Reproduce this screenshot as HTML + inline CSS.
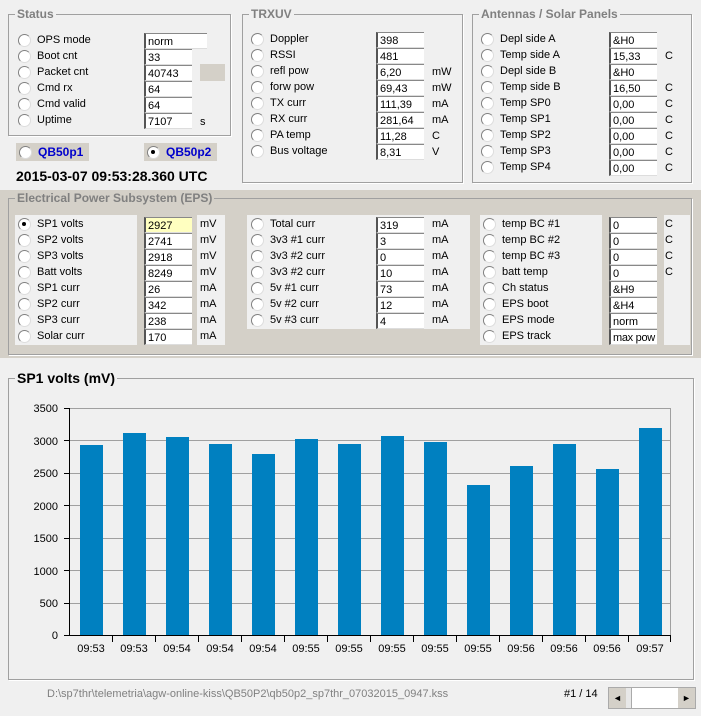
<!DOCTYPE html><html><head><meta charset="utf-8"><style>
*{margin:0;padding:0;box-sizing:border-box}
body{width:701px;height:716px;background:#f0f0f0;font-family:"Liberation Sans",Arial,sans-serif;font-size:11px;color:#000;position:relative;overflow:hidden}
.a{position:absolute}
.gb{position:absolute;border:1px solid #a0a0a0;box-shadow:1px 1px 0 #fff}
.gt{position:absolute;background:#f0f0f0;color:#808080;font-weight:bold;font-size:12px;padding:0 2px;top:-8px;left:6px;line-height:14px}
.r{position:absolute;height:16px;line-height:16px;padding-left:22px;white-space:nowrap}
.r:before{content:"";position:absolute;left:3px;top:2px;width:11px;height:11px;border-radius:50%;background:#fff;border:1px solid #808080;border-right-color:#ddd;border-bottom-color:#ddd}
.r.on:after{content:"";position:absolute;left:7px;top:6px;width:4px;height:4px;border-radius:50%;background:#000}
.v{position:absolute;width:48px;height:16px;background:#fff;border-left:2px solid #555;border-top:1px solid #888;border-bottom:1px solid #ddd;line-height:16px;padding-left:2px;font-size:11px;white-space:nowrap;overflow:hidden}
.u{position:absolute;line-height:14px}
.p{position:absolute;background:#f0f0f0}
</style></head><body>

<!-- Status -->
<div class="gb" style="left:8px;top:14px;width:223px;height:122px"><div class="gt">Status</div></div>
<div class="r" style="left:15px;top:32px">OPS mode</div>
<div class="r" style="left:15px;top:48px">Boot cnt</div>
<div class="r" style="left:15px;top:64px">Packet cnt</div>
<div class="r" style="left:15px;top:80px">Cmd rx</div>
<div class="r" style="left:15px;top:96px">Cmd valid</div>
<div class="r" style="left:15px;top:112px">Uptime</div>
<div class="v" style="left:144px;top:33px;width:63px">norm</div>
<div class="v" style="left:144px;top:49px">33</div>
<div class="v" style="left:144px;top:65px">40743</div>
<div class="v" style="left:144px;top:81px">64</div>
<div class="v" style="left:144px;top:97px">64</div>
<div class="v" style="left:144px;top:113px">7107</div>
<div class="a" style="left:200px;top:64px;width:25px;height:17px;background:#d4d0c8"></div>
<div class="u" style="left:200px;top:115px">s</div>
<div class="a" style="left:16px;top:143px;width:73px;height:18px;background:#d4d0c8"></div>
<div class="r" style="left:16px;top:144px;color:#00c;font-weight:bold;font-size:12px">QB50p1</div>
<div class="a" style="left:144px;top:143px;width:73px;height:18px;background:#d4d0c8"></div>
<div class="r on" style="left:144px;top:144px;color:#00c;font-weight:bold;font-size:12px">QB50p2</div>
<div class="a" style="left:16px;top:168px;font-weight:bold;font-size:14px">2015-03-07 09:53:28.360 UTC</div>

<!-- TRXUV -->
<div class="gb" style="left:242px;top:14px;width:221px;height:169px"><div class="gt">TRXUV</div></div>
<div class="r" style="left:248px;top:31px">Doppler</div>
<div class="r" style="left:248px;top:47px">RSSI</div>
<div class="r" style="left:248px;top:63px">refl pow</div>
<div class="r" style="left:248px;top:79px">forw pow</div>
<div class="r" style="left:248px;top:95px">TX curr</div>
<div class="r" style="left:248px;top:111px">RX curr</div>
<div class="r" style="left:248px;top:127px">PA temp</div>
<div class="r" style="left:248px;top:143px">Bus voltage</div>
<div class="v" style="left:376px;top:32px">398</div>
<div class="v" style="left:376px;top:48px">481</div>
<div class="v" style="left:376px;top:64px">6,20</div>
<div class="v" style="left:376px;top:80px">69,43</div>
<div class="v" style="left:376px;top:96px">111,39</div>
<div class="v" style="left:376px;top:112px">281,64</div>
<div class="v" style="left:376px;top:128px">11,28</div>
<div class="v" style="left:376px;top:144px">8,31</div>
<div class="u" style="left:432px;top:65px">mW</div>
<div class="u" style="left:432px;top:81px">mW</div>
<div class="u" style="left:432px;top:97px">mA</div>
<div class="u" style="left:432px;top:113px">mA</div>
<div class="u" style="left:432px;top:129px">C</div>
<div class="u" style="left:432px;top:145px">V</div>

<!-- Antennas -->
<div class="gb" style="left:472px;top:14px;width:220px;height:169px"><div class="gt">Antennas / Solar Panels</div></div>
<div class="r" style="left:478px;top:31px">Depl side A</div>
<div class="r" style="left:478px;top:47px">Temp side A</div>
<div class="r" style="left:478px;top:63px">Depl side B</div>
<div class="r" style="left:478px;top:79px">Temp side B</div>
<div class="r" style="left:478px;top:95px">Temp SP0</div>
<div class="r" style="left:478px;top:111px">Temp SP1</div>
<div class="r" style="left:478px;top:127px">Temp SP2</div>
<div class="r" style="left:478px;top:143px">Temp SP3</div>
<div class="r" style="left:478px;top:159px">Temp SP4</div>
<div class="v" style="left:609px;top:32px">&amp;H0</div>
<div class="v" style="left:609px;top:48px">15,33</div>
<div class="v" style="left:609px;top:64px">&amp;H0</div>
<div class="v" style="left:609px;top:80px">16,50</div>
<div class="v" style="left:609px;top:96px">0,00</div>
<div class="v" style="left:609px;top:112px">0,00</div>
<div class="v" style="left:609px;top:128px">0,00</div>
<div class="v" style="left:609px;top:144px">0,00</div>
<div class="v" style="left:609px;top:160px">0,00</div>
<div class="u" style="left:665px;top:49px">C</div>
<div class="u" style="left:665px;top:81px">C</div>
<div class="u" style="left:665px;top:97px">C</div>
<div class="u" style="left:665px;top:113px">C</div>
<div class="u" style="left:665px;top:129px">C</div>
<div class="u" style="left:665px;top:145px">C</div>
<div class="u" style="left:665px;top:161px">C</div>

<!-- EPS -->
<div class="a" style="left:0;top:190px;width:701px;height:168px;background:#d4d0c8"></div>
<div class="gb" style="left:8px;top:198px;width:684px;height:157px"><div class="gt" style="background:#d4d0c8">Electrical Power Subsystem (EPS)</div></div>
<div class="p" style="left:15px;top:215px;width:122px;height:130px"></div>
<div class="p" style="left:197px;top:215px;width:28px;height:130px"></div>
<div class="p" style="left:247px;top:215px;width:223px;height:114px"></div>
<div class="p" style="left:480px;top:215px;width:122px;height:130px"></div>
<div class="p" style="left:664px;top:215px;width:26px;height:130px"></div>
<div class="r on" style="left:15px;top:216px">SP1 volts</div>
<div class="r" style="left:15px;top:232px">SP2 volts</div>
<div class="r" style="left:15px;top:248px">SP3 volts</div>
<div class="r" style="left:15px;top:264px">Batt volts</div>
<div class="r" style="left:15px;top:280px">SP1 curr</div>
<div class="r" style="left:15px;top:296px">SP2 curr</div>
<div class="r" style="left:15px;top:312px">SP3 curr</div>
<div class="r" style="left:15px;top:328px">Solar curr</div>
<div class="v" style="left:144px;top:217px;background:#ffffc0">2927</div>
<div class="v" style="left:144px;top:233px">2741</div>
<div class="v" style="left:144px;top:249px">2918</div>
<div class="v" style="left:144px;top:265px">8249</div>
<div class="v" style="left:144px;top:281px">26</div>
<div class="v" style="left:144px;top:297px">342</div>
<div class="v" style="left:144px;top:313px">238</div>
<div class="v" style="left:144px;top:329px">170</div>
<div class="u" style="left:200px;top:217px">mV</div>
<div class="u" style="left:200px;top:233px">mV</div>
<div class="u" style="left:200px;top:249px">mV</div>
<div class="u" style="left:200px;top:265px">mV</div>
<div class="u" style="left:200px;top:281px">mA</div>
<div class="u" style="left:200px;top:297px">mA</div>
<div class="u" style="left:200px;top:313px">mA</div>
<div class="u" style="left:200px;top:329px">mA</div>

<div class="r" style="left:248px;top:216px">Total curr</div>
<div class="r" style="left:248px;top:232px">3v3 #1 curr</div>
<div class="r" style="left:248px;top:248px">3v3 #2 curr</div>
<div class="r" style="left:248px;top:264px">3v3 #2 curr</div>
<div class="r" style="left:248px;top:280px">5v #1 curr</div>
<div class="r" style="left:248px;top:296px">5v #2 curr</div>
<div class="r" style="left:248px;top:312px">5v #3 curr</div>
<div class="v" style="left:376px;top:217px">319</div>
<div class="v" style="left:376px;top:233px">3</div>
<div class="v" style="left:376px;top:249px">0</div>
<div class="v" style="left:376px;top:265px">10</div>
<div class="v" style="left:376px;top:281px">73</div>
<div class="v" style="left:376px;top:297px">12</div>
<div class="v" style="left:376px;top:313px">4</div>
<div class="u" style="left:432px;top:217px">mA</div>
<div class="u" style="left:432px;top:233px">mA</div>
<div class="u" style="left:432px;top:249px">mA</div>
<div class="u" style="left:432px;top:265px">mA</div>
<div class="u" style="left:432px;top:281px">mA</div>
<div class="u" style="left:432px;top:297px">mA</div>
<div class="u" style="left:432px;top:313px">mA</div>

<div class="r" style="left:480px;top:216px">temp BC #1</div>
<div class="r" style="left:480px;top:232px">temp BC #2</div>
<div class="r" style="left:480px;top:248px">temp BC #3</div>
<div class="r" style="left:480px;top:264px">batt temp</div>
<div class="r" style="left:480px;top:280px">Ch status</div>
<div class="r" style="left:480px;top:296px">EPS boot</div>
<div class="r" style="left:480px;top:312px">EPS mode</div>
<div class="r" style="left:480px;top:328px">EPS track</div>
<div class="v" style="left:609px;top:217px">0</div>
<div class="v" style="left:609px;top:233px">0</div>
<div class="v" style="left:609px;top:249px">0</div>
<div class="v" style="left:609px;top:265px">0</div>
<div class="v" style="left:609px;top:281px">&amp;H9</div>
<div class="v" style="left:609px;top:297px">&amp;H4</div>
<div class="v" style="left:609px;top:313px">norm</div>
<div class="v" style="left:609px;top:329px;letter-spacing:-0.3px">max pow</div>
<div class="u" style="left:665px;top:217px">C</div>
<div class="u" style="left:665px;top:233px">C</div>
<div class="u" style="left:665px;top:249px">C</div>
<div class="u" style="left:665px;top:265px">C</div>

<!-- Chart -->
<div class="gb" style="left:8px;top:378px;width:686px;height:302px"><div class="gt" style="color:#000;font-size:14px;top:-10px;line-height:18px">SP1 volts (mV)</div></div>
<svg class="a" style="left:0;top:0" width="701" height="716" font-family="Liberation Sans, Arial, sans-serif" font-size="11">
<g stroke="#a0a0a0" stroke-width="1">
<line x1="69" y1="408.5" x2="670" y2="408.5"/><line x1="69" y1="440.5" x2="670" y2="440.5"/><line x1="69" y1="473.5" x2="670" y2="473.5"/><line x1="69" y1="505.5" x2="670" y2="505.5"/><line x1="69" y1="538.5" x2="670" y2="538.5"/><line x1="69" y1="570.5" x2="670" y2="570.5"/><line x1="69" y1="603.5" x2="670" y2="603.5"/><line x1="670.5" y1="408" x2="670.5" y2="635"/>
</g>
<g fill="#0080c0">
<rect x="80" y="445" width="23" height="190"/><rect x="123" y="433" width="23" height="202"/><rect x="166" y="437" width="23" height="198"/><rect x="209" y="444" width="23" height="191"/><rect x="252" y="454" width="23" height="181"/><rect x="295" y="439" width="23" height="196"/><rect x="338" y="444" width="23" height="191"/><rect x="381" y="436" width="23" height="199"/><rect x="424" y="442" width="23" height="193"/><rect x="467" y="485" width="23" height="150"/><rect x="510" y="466" width="23" height="169"/><rect x="553" y="444" width="23" height="191"/><rect x="596" y="469" width="23" height="166"/><rect x="639" y="428" width="23" height="207"/>
</g>
<g stroke="#000" stroke-width="1">
<line x1="69.5" y1="408" x2="69.5" y2="636"/><line x1="64" y1="635.5" x2="671" y2="635.5"/>
<line x1="64" y1="408.5" x2="69" y2="408.5"/><line x1="64" y1="440.5" x2="69" y2="440.5"/><line x1="64" y1="473.5" x2="69" y2="473.5"/><line x1="64" y1="505.5" x2="69" y2="505.5"/><line x1="64" y1="538.5" x2="69" y2="538.5"/><line x1="64" y1="570.5" x2="69" y2="570.5"/><line x1="64" y1="603.5" x2="69" y2="603.5"/>
<line x1="112.5" y1="635" x2="112.5" y2="642"/><line x1="155.5" y1="635" x2="155.5" y2="642"/><line x1="198.5" y1="635" x2="198.5" y2="642"/><line x1="241.5" y1="635" x2="241.5" y2="642"/><line x1="284.5" y1="635" x2="284.5" y2="642"/><line x1="327.5" y1="635" x2="327.5" y2="642"/><line x1="370.5" y1="635" x2="370.5" y2="642"/><line x1="413.5" y1="635" x2="413.5" y2="642"/><line x1="456.5" y1="635" x2="456.5" y2="642"/><line x1="499.5" y1="635" x2="499.5" y2="642"/><line x1="542.5" y1="635" x2="542.5" y2="642"/><line x1="585.5" y1="635" x2="585.5" y2="642"/><line x1="628.5" y1="635" x2="628.5" y2="642"/><line x1="670.5" y1="635" x2="670.5" y2="642"/>
</g>
<g text-anchor="end">
<text x="58" y="412">3500</text><text x="58" y="445">3000</text><text x="58" y="477">2500</text><text x="58" y="510">2000</text><text x="58" y="542">1500</text><text x="58" y="575">1000</text><text x="58" y="607">500</text><text x="58" y="639">0</text>
</g>
<g text-anchor="middle">
<text x="91" y="652">09:53</text><text x="134" y="652">09:53</text><text x="177" y="652">09:54</text><text x="220" y="652">09:54</text><text x="263" y="652">09:54</text><text x="306" y="652">09:55</text><text x="349" y="652">09:55</text><text x="392" y="652">09:55</text><text x="435" y="652">09:55</text><text x="478" y="652">09:55</text><text x="521" y="652">09:56</text><text x="564" y="652">09:56</text><text x="607" y="652">09:56</text><text x="650" y="652">09:57</text>
</g>
</svg>

<div class="a" style="left:47px;top:688px;color:#808080;font-size:11px">D:\sp7thr\telemetria\agw-online-kiss\QB50P2\qb50p2_sp7thr_07032015_0947.kss</div>
<div class="a" style="left:564px;top:688px;font-size:11px">#1 / 14</div>
<div class="a" style="left:608px;top:687px;width:88px;height:22px;background:#fff;border:1px solid #aaa"></div>
<div class="a" style="left:609px;top:688px;width:17px;height:20px;background:#d4d0c8;font-size:9px;line-height:20px;text-align:center">◄</div>
<div class="a" style="left:626px;top:688px;width:6px;height:20px;background:#e8e8e8;border-right:1px solid #aaa"></div>
<div class="a" style="left:678px;top:688px;width:17px;height:20px;background:#d4d0c8;font-size:9px;line-height:20px;text-align:center">►</div>
</body></html>
